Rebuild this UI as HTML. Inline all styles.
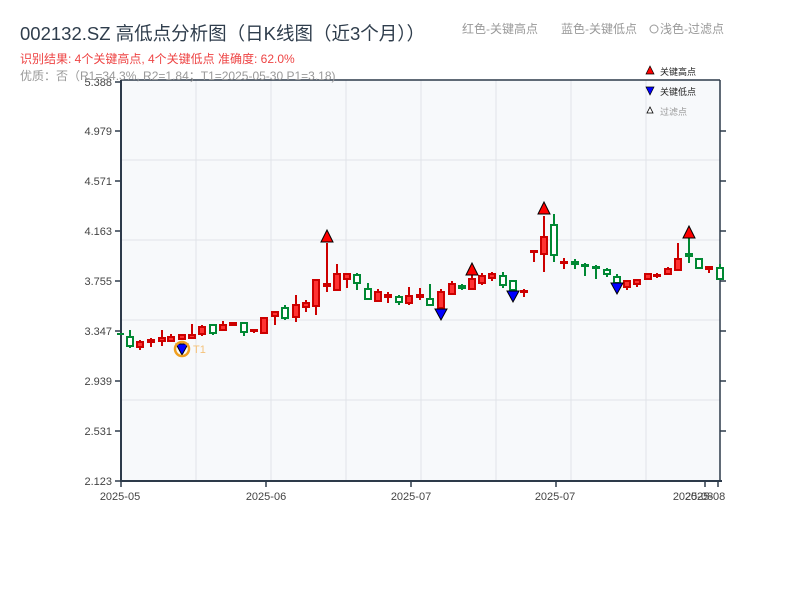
<!DOCTYPE html>
<html><head><meta charset="utf-8"><style>
html,body{margin:0;padding:0;background:#fff;width:800px;height:600px;overflow:hidden}
svg text{font-family:"Liberation Sans","Noto Sans CJK SC",sans-serif}
</style></head><body>
<svg width="800" height="600" viewBox="0 0 800 600" xmlns="http://www.w3.org/2000/svg">
<rect x="121" y="80" width="599" height="401" fill="#f7f9fb"/>
<g stroke="#e1e4e8" stroke-width="1">
<line x1="196" y1="80" x2="196" y2="481"/><line x1="271" y1="80" x2="271" y2="481"/><line x1="346" y1="80" x2="346" y2="481"/><line x1="421" y1="80" x2="421" y2="481"/><line x1="496" y1="80" x2="496" y2="481"/><line x1="571" y1="80" x2="571" y2="481"/><line x1="646" y1="80" x2="646" y2="481"/>
<line x1="121" y1="160" x2="720" y2="160"/><line x1="121" y1="240" x2="720" y2="240"/><line x1="121" y1="320" x2="720" y2="320"/><line x1="121" y1="400" x2="720" y2="400"/>
</g>
<g stroke="#2d3a4a" stroke-width="1.5" fill="none">
<line x1="121" y1="80" x2="720" y2="80"/>
<line x1="121" y1="80" x2="121" y2="482" stroke-width="2"/>
<line x1="720" y1="80" x2="720" y2="482"/>
<line x1="120" y1="481" x2="722" y2="481" stroke-width="2"/>
<line x1="115" y1="82" x2="121" y2="82"/><line x1="115" y1="131" x2="121" y2="131"/><line x1="115" y1="181" x2="121" y2="181"/><line x1="115" y1="231" x2="121" y2="231"/><line x1="115" y1="281" x2="121" y2="281"/><line x1="115" y1="331" x2="121" y2="331"/><line x1="115" y1="381" x2="121" y2="381"/><line x1="115" y1="431" x2="121" y2="431"/><line x1="115" y1="481" x2="121" y2="481"/>
<line x1="720" y1="131" x2="726" y2="131"/><line x1="720" y1="181" x2="726" y2="181"/><line x1="720" y1="231" x2="726" y2="231"/><line x1="720" y1="281" x2="726" y2="281"/><line x1="720" y1="331" x2="726" y2="331"/><line x1="720" y1="381" x2="726" y2="381"/><line x1="720" y1="431" x2="726" y2="431"/>
<line x1="121" y1="481" x2="121" y2="487"/><line x1="266" y1="481" x2="266" y2="487"/><line x1="411" y1="481" x2="411" y2="487"/><line x1="556" y1="481" x2="556" y2="487"/><line x1="705" y1="481" x2="705" y2="487"/><line x1="718" y1="481" x2="718" y2="487"/>
</g>
<g font-size="11" fill="#444" text-anchor="end">
<text x="112" y="86">5.388</text><text x="112" y="135">4.979</text><text x="112" y="185">4.571</text><text x="112" y="235">4.163</text><text x="112" y="285">3.755</text><text x="112" y="335">3.347</text><text x="112" y="385">2.939</text><text x="112" y="435">2.531</text><text x="112" y="485">2.123</text>
</g>
<g font-size="11" fill="#444" text-anchor="middle">
<text x="120" y="500">2025-05</text><text x="266" y="500">2025-06</text><text x="411" y="500">2025-07</text><text x="555" y="500">2025-07</text><text x="693" y="500">2025-08</text><text x="705" y="500">2025-08</text>
</g>
<!-- candles -->
<g stroke-width="2">
<g stroke="#cc0000" fill="#ff3333">
<line x1="140" y1="340" x2="140" y2="350"/><rect x="137" y="342" width="6" height="5"/>
<line x1="151" y1="338" x2="151" y2="347"/><rect x="148" y="340" width="6" height="2"/>
<line x1="162" y1="330" x2="162" y2="346"/><rect x="159" y="338" width="6" height="3"/>
<line x1="171" y1="334" x2="171" y2="342"/><rect x="168" y="337" width="6" height="4"/>
<line x1="182" y1="334" x2="182" y2="340"/><rect x="179" y="335" width="6" height="4"/>
<line x1="192" y1="324" x2="192" y2="338"/><rect x="189" y="335" width="6" height="3"/>
<line x1="202" y1="325" x2="202" y2="336"/><rect x="199" y="327" width="6" height="7"/>
<line x1="223" y1="321" x2="223" y2="331"/><rect x="220" y="325" width="6" height="5"/>
<line x1="233" y1="322" x2="233" y2="326"/><rect x="230" y="323" width="6" height="2"/>
<line x1="254" y1="329" x2="254" y2="333"/><rect x="251" y="330" width="6" height="1"/>
<line x1="264" y1="318" x2="264" y2="334"/><rect x="261" y="318" width="6" height="15"/>
<line x1="275" y1="312" x2="275" y2="325"/><rect x="272" y="312" width="6" height="4"/>
<line x1="296" y1="295" x2="296" y2="322"/><rect x="293" y="305" width="6" height="12"/>
<line x1="306" y1="300" x2="306" y2="312"/><rect x="303" y="303" width="6" height="4"/>
<line x1="316" y1="280" x2="316" y2="315"/><rect x="313" y="280" width="6" height="26"/>
<line x1="327" y1="243" x2="327" y2="292"/><rect x="324" y="284" width="6" height="2"/>
<line x1="337" y1="264" x2="337" y2="291"/><rect x="334" y="274" width="6" height="16"/>
<line x1="347" y1="273" x2="347" y2="288"/><rect x="344" y="274" width="6" height="5"/>
<line x1="378" y1="289" x2="378" y2="302"/><rect x="375" y="292" width="6" height="9"/>
<line x1="388" y1="292" x2="388" y2="303"/><rect x="385" y="295" width="6" height="2"/>
<line x1="409" y1="287" x2="409" y2="305"/><rect x="406" y="296" width="6" height="7"/>
<line x1="420" y1="288" x2="420" y2="300"/><rect x="417" y="295" width="6" height="2"/>
<line x1="441" y1="289" x2="441" y2="310"/><rect x="438" y="292" width="6" height="16"/>
<line x1="452" y1="281" x2="452" y2="295"/><rect x="449" y="284" width="6" height="10"/>
<line x1="472" y1="272" x2="472" y2="290"/><rect x="469" y="279" width="6" height="10"/>
<line x1="482" y1="273" x2="482" y2="285"/><rect x="479" y="276" width="6" height="7"/>
<line x1="492" y1="272" x2="492" y2="281"/><rect x="489" y="274" width="6" height="4"/>
<line x1="524" y1="289" x2="524" y2="297"/><rect x="521" y="291" width="6" height="1"/>
<line x1="534" y1="251" x2="534" y2="262"/><rect x="531" y="251" width="6" height="1"/>
<line x1="544" y1="216" x2="544" y2="272"/><rect x="541" y="237" width="6" height="17"/>
<line x1="564" y1="258" x2="564" y2="269"/><rect x="561" y="262" width="6" height="1"/>
<line x1="627" y1="280" x2="627" y2="290"/><rect x="624" y="281" width="6" height="6"/>
<line x1="637" y1="279" x2="637" y2="287"/><rect x="634" y="280" width="6" height="4"/>
<line x1="648" y1="273" x2="648" y2="280"/><rect x="645" y="274" width="6" height="5"/>
<line x1="657" y1="273" x2="657" y2="278"/><rect x="654" y="275" width="6" height="1"/>
<line x1="668" y1="267" x2="668" y2="275"/><rect x="665" y="269" width="6" height="5"/>
<line x1="678" y1="243" x2="678" y2="271"/><rect x="675" y="259" width="6" height="11"/>
<line x1="709" y1="267" x2="709" y2="273"/><rect x="706" y="267" width="6" height="2"/>
</g>
<g stroke="#008833" fill="#fff">
<line x1="117" y1="334" x2="124" y2="334"/>
<line x1="130" y1="330" x2="130" y2="348"/><rect x="127" y="337" width="6" height="9"/>
<line x1="213" y1="324" x2="213" y2="335"/><rect x="210" y="325" width="6" height="8"/>
<line x1="244" y1="322" x2="244" y2="336"/><rect x="241" y="323" width="6" height="9"/>
<line x1="285" y1="305" x2="285" y2="320"/><rect x="282" y="308" width="6" height="10"/>
<line x1="357" y1="273" x2="357" y2="290"/><rect x="354" y="275" width="6" height="8"/>
<line x1="368" y1="283" x2="368" y2="300"/><rect x="365" y="289" width="6" height="10"/>
<line x1="399" y1="295" x2="399" y2="305"/><rect x="396" y="297" width="6" height="5"/>
<line x1="430" y1="284" x2="430" y2="306"/><rect x="427" y="299" width="6" height="6"/>
<line x1="462" y1="284" x2="462" y2="290"/><rect x="459" y="286" width="6" height="2"/>
<line x1="503" y1="272" x2="503" y2="288"/><rect x="500" y="276" width="6" height="9"/>
<line x1="513" y1="281" x2="513" y2="292"/><rect x="510" y="281" width="6" height="9"/>
<line x1="554" y1="214" x2="554" y2="262"/><rect x="551" y="225" width="6" height="30"/>
<line x1="575" y1="259" x2="575" y2="269"/><rect x="572" y="262" width="6" height="2"/>
<line x1="585" y1="263" x2="585" y2="276"/><rect x="582" y="265" width="6" height="1"/>
<line x1="596" y1="265" x2="596" y2="279"/><rect x="593" y="267" width="6" height="1"/>
<line x1="607" y1="268" x2="607" y2="277"/><rect x="604" y="270" width="6" height="4"/>
<line x1="617" y1="274" x2="617" y2="286"/><rect x="614" y="277" width="6" height="6"/>
<line x1="689" y1="237" x2="689" y2="263"/><rect x="686" y="254" width="6" height="2"/>
<line x1="699" y1="258" x2="699" y2="269"/><rect x="696" y="259" width="6" height="9"/>
<line x1="720" y1="264" x2="720" y2="280"/><rect x="717" y="268" width="6" height="11"/>
</g>
</g>
<!-- markers -->
<g stroke="#000" stroke-width="1">
<polygon points="327,230 321,242 333,242" fill="#ff0000"/>
<polygon points="472,263 466,275 478,275" fill="#ff0000"/>
<polygon points="544,202 538,214 550,214" fill="#ff0000"/>
<polygon points="689,226 683,238 695,238" fill="#ff0000"/>
<polygon points="435,309 447,309 441,320" fill="#0000ff"/>
<polygon points="507,291 519,291 513,302" fill="#0000ff"/>
<polygon points="611,283 623,283 617,294" fill="#0000ff"/>
<polygon points="176,344 188,344 182,355" fill="#0000ff"/>
</g>
<circle cx="182" cy="349" r="7" fill="none" stroke="#f0a020" stroke-width="2.5"/>
<text x="193" y="353" font-size="11" fill="#f5c27a">T1</text>
<!-- legend -->
<polygon points="650,66 646,74 654,74" fill="#f00" stroke="#000" stroke-width="0.7"/>
<text x="660" y="75" font-size="9" fill="#222">关键高点</text>
<polygon points="646,87 654,87 650,95" fill="#00f" stroke="#000" stroke-width="0.7"/>
<text x="660" y="95" font-size="9" fill="#222">关键低点</text>
<polygon points="650,107 647,113 653,113" fill="#fff" stroke="#000" stroke-width="0.8"/>
<text x="660" y="115" font-size="9" fill="#999">过滤点</text>
<!-- titles -->
<text x="20" y="40" font-size="18.5" fill="#2f3d4c">002132.SZ 高低点分析图（日K线图（近3个月））</text>
<text x="20" y="63" font-size="12" fill="#ee4444">识别结果: 4个关键高点, 4个关键低点  准确度: 62.0%</text>
<text x="20" y="80" font-size="12" fill="#999">优质：否（R1=34.3%, R2=1.84；T1=2025-05-30 P1=3.18)</text>
<text x="462" y="33" font-size="12" fill="#999">红色-关键高点</text>
<text x="561" y="33" font-size="12" fill="#999">蓝色-关键低点</text>
<circle cx="654" cy="29" r="4" fill="none" stroke="#999"/>
<text x="660" y="33" font-size="12" fill="#999">浅色-过滤点</text>
</svg>
</body></html>
